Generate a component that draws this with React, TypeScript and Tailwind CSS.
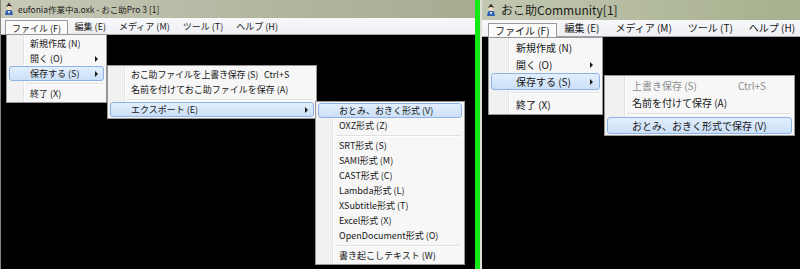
import React from "react";

type Entry =
  | { sep: true }
  | {
      label: string;
      shortcut?: string;
      arrow?: boolean;
      active?: boolean;
      disabled?: boolean;
    };

const fileLeft: Entry[] = [
  { label: "新規作成 (N)" },
  { label: "開く (O)", arrow: true },
  { label: "保存する (S)", arrow: true, active: true },
  { sep: true },
  { label: "終了 (X)" },
];

const saveLeft: Entry[] = [
  { label: "おこ助ファイルを上書き保存 (S)", shortcut: "Ctrl+S" },
  { label: "名前を付けておこ助ファイルを保存 (A)" },
  { sep: true },
  { label: "エクスポート (E)", arrow: true, active: true },
];

const exportLeft: Entry[] = [
  { label: "おとみ、おきく形式 (V)", active: true },
  { label: "OXZ形式 (Z)" },
  { sep: true },
  { label: "SRT形式 (S)" },
  { label: "SAMI形式 (M)" },
  { label: "CAST形式 (C)" },
  { label: "Lambda形式 (L)" },
  { label: "XSubtitle形式 (T)" },
  { label: "Excel形式 (X)" },
  { label: "OpenDocument形式 (O)" },
  { sep: true },
  { label: "書き起こしテキスト (W)" },
];

const fileRight: Entry[] = fileLeft;

const saveRight: Entry[] = [
  { label: "上書き保存 (S)", shortcut: "Ctrl+S", disabled: true },
  { label: "名前を付けて保存 (A)" },
  { sep: true },
  { label: "おとみ、おきく形式で保存 (V)", active: true },
];

const menuNames = ["ファイル (F)", "編集 (E)", "メディア (M)", "ツール (T)", "ヘルプ (H)"];

function AppIcon({ size }: { size: number }) {
  return (
    <svg width={size} height={size} viewBox="0 0 12 12">
      <path d="M2 12 L3 7.5 Q6 6 9 7.5 L10 12 Z" fill="#2f5fb0" />
      <path d="M4.6 8 L6 11 L7.4 8 Z" fill="#e8eef8" />
      <circle cx="6" cy="4.4" r="2.6" fill="#f3d9bf" />
      <path d="M3.3 4.2 Q3.4 1.3 6 1.2 Q8.6 1.3 8.7 4.2 Q7.5 2.8 6 3 Q4.5 2.8 3.3 4.2 Z" fill="#2a2a2a" />
      <circle cx="6" cy="1" r="0.9" fill="#2a2a2a" />
    </svg>
  );
}

function Arrow() {
  return (
    <span className="ml-auto h-0 w-0 border-y-[3px] border-l-[3px] border-y-transparent border-l-[#1b1b1b]" />
  );
}

function Menu({
  items,
  pos,
  size,
}: {
  items: Entry[];
  pos: string;
  size: "sm" | "md";
}) {
  const sm = size === "sm";
  return (
    <div
      className={`absolute z-10 border border-[#979797] p-[1px] shadow-[2px_2px_3px_rgba(0,0,0,0.35)] ${
        sm
          ? "bg-[linear-gradient(90deg,#f1f1f1_0,#f1f1f1_16px,#e2e3e3_16px,#e2e3e3_17px,#ffffff_17px,#ffffff_18px,#f7f7f7_18px)]"
          : "bg-[linear-gradient(90deg,#f1f1f1_0,#f1f1f1_19px,#e2e3e3_19px,#e2e3e3_20px,#ffffff_20px,#ffffff_21px,#f7f7f7_21px)]"
      } ${pos}`}
    >
      {items.map((it, i) =>
        "sep" in it ? (
          <div
            key={i}
            className={`flex items-center pr-[2px] ${sm ? "h-[5px] pl-[18px]" : "h-[6px] pl-[21px]"}`}
          >
            <div className="h-[2px] flex-1 border-y border-t-[#e0e0e0] border-b-white" />
          </div>
        ) : (
          <div
            key={i}
            className={`mx-[1px] flex items-center rounded-[3px] border leading-none ${
              it.active
                ? "border-[#8fb4e3] bg-[linear-gradient(#e2eefc,#cbe0f8)]"
                : "border-transparent"
            } ${sm ? "h-[15px] pl-[20px] pr-[5px] text-[9px]" : "h-[17px] pl-[24px] pr-[6px] text-[10px]"} ${
              it.disabled ? "text-[#8d8d8d]" : "text-[#161616]"
            }`}
          >
            <span
              className={
                it.shortcut
                  ? sm
                    ? "w-[133px] shrink-0 whitespace-nowrap tracking-[-0.2px]"
                    : "w-[106px] shrink-0 whitespace-nowrap"
                  : "whitespace-nowrap"
              }
            >
              {it.label}
            </span>
            {it.shortcut && <span>{it.shortcut}</span>}
            {it.arrow && <Arrow />}
          </div>
        )
      )}
    </div>
  );
}

function MenuBar({ size }: { size: "sm" | "md" }) {
  const sm = size === "sm";
  return (
    <div
      className={`flex h-[17px] border-b border-[#a5a7aa] bg-[linear-gradient(#f7f8fa,#eef0f3)] leading-none text-[#161616] ${
        sm ? "pl-[4px] text-[9px]" : "pl-[6px] text-[10px]"
      }`}
    >
      {menuNames.map((name, i) =>
        i === 0 ? (
          <div
            key={name}
            className={`-mb-[1px] flex items-center border border-b-0 border-[#9a9a9a] bg-[#fbfbfb] whitespace-nowrap ${
              sm ? "mt-[2px] px-[6px]" : "mt-[3px] px-[6px]"
            }`}
          >
            {name}
          </div>
        ) : (
          <div key={name} className={`flex items-center whitespace-nowrap ${sm ? "px-[6.5px]" : "px-[8px]"}`}>
            {name}
          </div>
        )
      )}
    </div>
  );
}

export default function App() {
  return (
    <div className="flex h-[269px] w-[800px] overflow-hidden bg-black font-['Noto_Sans_CJK_JP',sans-serif]">
      {/* left window: おこ助Pro 3 */}
      <div className="relative flex w-[475px] shrink-0 flex-col border-l border-[#85867a]">
        <div className="flex h-[18px] items-center gap-[3px] bg-[linear-gradient(90deg,#c8cab9_0%,#b6b9a3_45%,#a7ab90_100%)] pl-[2px] text-[8.5px] leading-none text-[#1c1c1c]">
          <AppIcon size={12} />
          <span className="whitespace-nowrap">eufonia作業中a.oxk - おこ助Pro 3 [1]</span>
        </div>
        <MenuBar size="sm" />
        <div className="flex-1 bg-black" />

        <Menu items={fileLeft} size="sm" pos="left-[5px] top-[34px] w-[101px]" />
        <Menu items={saveLeft} size="sm" pos="left-[106px] top-[65px] w-[210px]" />
        <Menu items={exportLeft} size="sm" pos="left-[314px] top-[101px] w-[150px]" />
      </div>

      <div className="w-[5px] shrink-0 bg-[#14e814]" />

      {/* right window: おこ助Community */}
      <div className="relative flex flex-1 flex-col border-l-2 border-[#dedfd6]">
        <div className="flex h-[20px] items-center gap-[4px] bg-[linear-gradient(90deg,#c3c8b2_0%,#b4bb9f_50%,#a6b08b_100%)] pl-[3px] text-[12px] leading-none text-[#1c1c1c]">
          <AppIcon size={12} />
          <span className="whitespace-nowrap">おこ助Community[1]</span>
        </div>
        <MenuBar size="md" />
        <div className="flex-1 bg-black" />

        <Menu items={fileRight} size="md" pos="left-[6px] top-[37px] w-[115px]" />
        <Menu items={saveRight} size="md" pos="left-[122px] top-[75px] w-[191px]" />
      </div>
    </div>
  );
}
